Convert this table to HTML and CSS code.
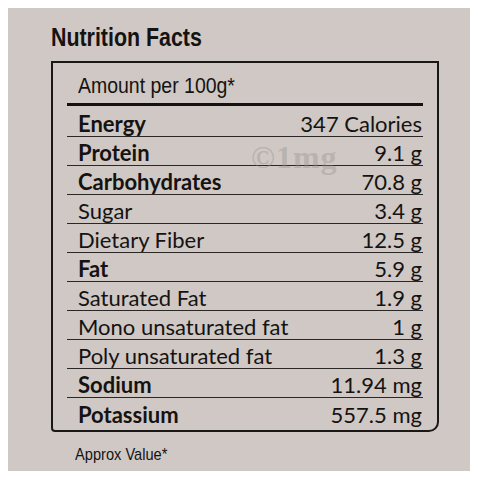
FILE: index.html
```html
<!DOCTYPE html>
<html>
	<head>
		<title>Nutrition Facts</title>
		<meta charset="UTF-8">
		<meta name="viewport" content="width=device-width, initial-scale=1.0">
		<link rel="stylesheet" href="styles.css">
	</head>
	<body>
		<div class="label">
			<h1 class="title">Nutrition Facts</h1>

			<div class="facts">
				<div class="amount"><span>Amount per 100g*</span></div>

				<div class="rows">
					<div class="row first bold"><span>Energy</span><span>347 Calories</span></div>
					<div class="row bold"><span>Protein</span><span>9.1 g</span></div>
					<div class="row bold"><span>Carbohydrates</span><span>70.8 g</span></div>
					<div class="row"><span>Sugar</span><span>3.4 g</span></div>
					<div class="row"><span>Dietary Fiber</span><span>12.5 g</span></div>
					<div class="row bold"><span>Fat</span><span>5.9 g</span></div>
					<div class="row"><span>Saturated Fat</span><span>1.9 g</span></div>
					<div class="row"><span>Mono unsaturated fat</span><span>1 g</span></div>
					<div class="row"><span>Poly unsaturated fat</span><span>1.3 g</span></div>
					<div class="row bold"><span>Sodium</span><span>11.94 mg</span></div>
					<div class="row last bold"><span>Potassium</span><span>557.5 mg</span></div>
				</div>

				<!-- marca d'agua da foto -->
				<div class="watermark">&copy;1mg</div>
			</div>

			<p class="note"><span>Approx Value*</span></p>
		</div>
	</body>
</html>
```

FILE: styles.css
```css
body {
	margin: 0;
	background: #ffffff;
	color: #151312;
}
.label {
	margin: 8px;
	width: 462px;
	height: 463px;
	box-sizing: border-box;
	padding: 14px 0 0 43px;
	background: #cfc8c4;
	display: flex;
	flex-direction: column;
}
.title {
	margin: 0 0 9px;
	font-family: "Liberation Sans", Arial, sans-serif;
	font-weight: bold;
	font-size: 25px;
	line-height: 30px;
	transform: scaleX(0.855);
	transform-origin: left;
	white-space: nowrap;
}
.facts {
	position: relative;
	width: 388px;
	height: 371px;
	box-sizing: border-box;
	border: 2px solid #1a1817;
	border-bottom-left-radius: 4px;
	border-bottom-right-radius: 10px;
	padding: 0 14px;
}
.amount {
	height: 43px;
	box-sizing: border-box;
	padding: 10px 0 0 11px;
	border-bottom: 3px solid #141211;
	font-family: "Liberation Sans", Arial, sans-serif;
	font-size: 22px;
	line-height: 26px;
}
.amount span {
	display: inline-block;
	transform: scaleX(0.885);
	transform-origin: left;
	white-space: nowrap;
}
.rows {
	display: flex;
	flex-direction: column;
	font-family: Lato, "Open Sans", sans-serif;
	font-size: 22px;
}
.row {
	height: 29px;
	box-sizing: border-box;
	display: flex;
	justify-content: space-between;
	align-items: center;
	padding: 3px 1px 0 11px;
	border-bottom: 1.5px solid #2a2725;
	line-height: 24px;
}
.row.first {
	height: 31px;
	padding-top: 5px;
}
.row.last {
	border-bottom: none;
	height: 30px;
}
.bold span:first-child {
	font-weight: bold;
}
.watermark {
	position: absolute;
	top: 76px;
	left: 198px;
	font-family: "Liberation Serif", serif;
	font-weight: bold;
	font-size: 32px;
	color: rgba(150, 146, 144, 0.4);
	letter-spacing: 1px;
}
.note {
	margin: 13px 0 0 24px;
	font-family: "Liberation Sans", Arial, sans-serif;
	font-size: 17px;
	line-height: 20px;
}
.note span {
	display: inline-block;
	transform: scaleX(0.86);
	transform-origin: left;
	white-space: nowrap;
}
```
